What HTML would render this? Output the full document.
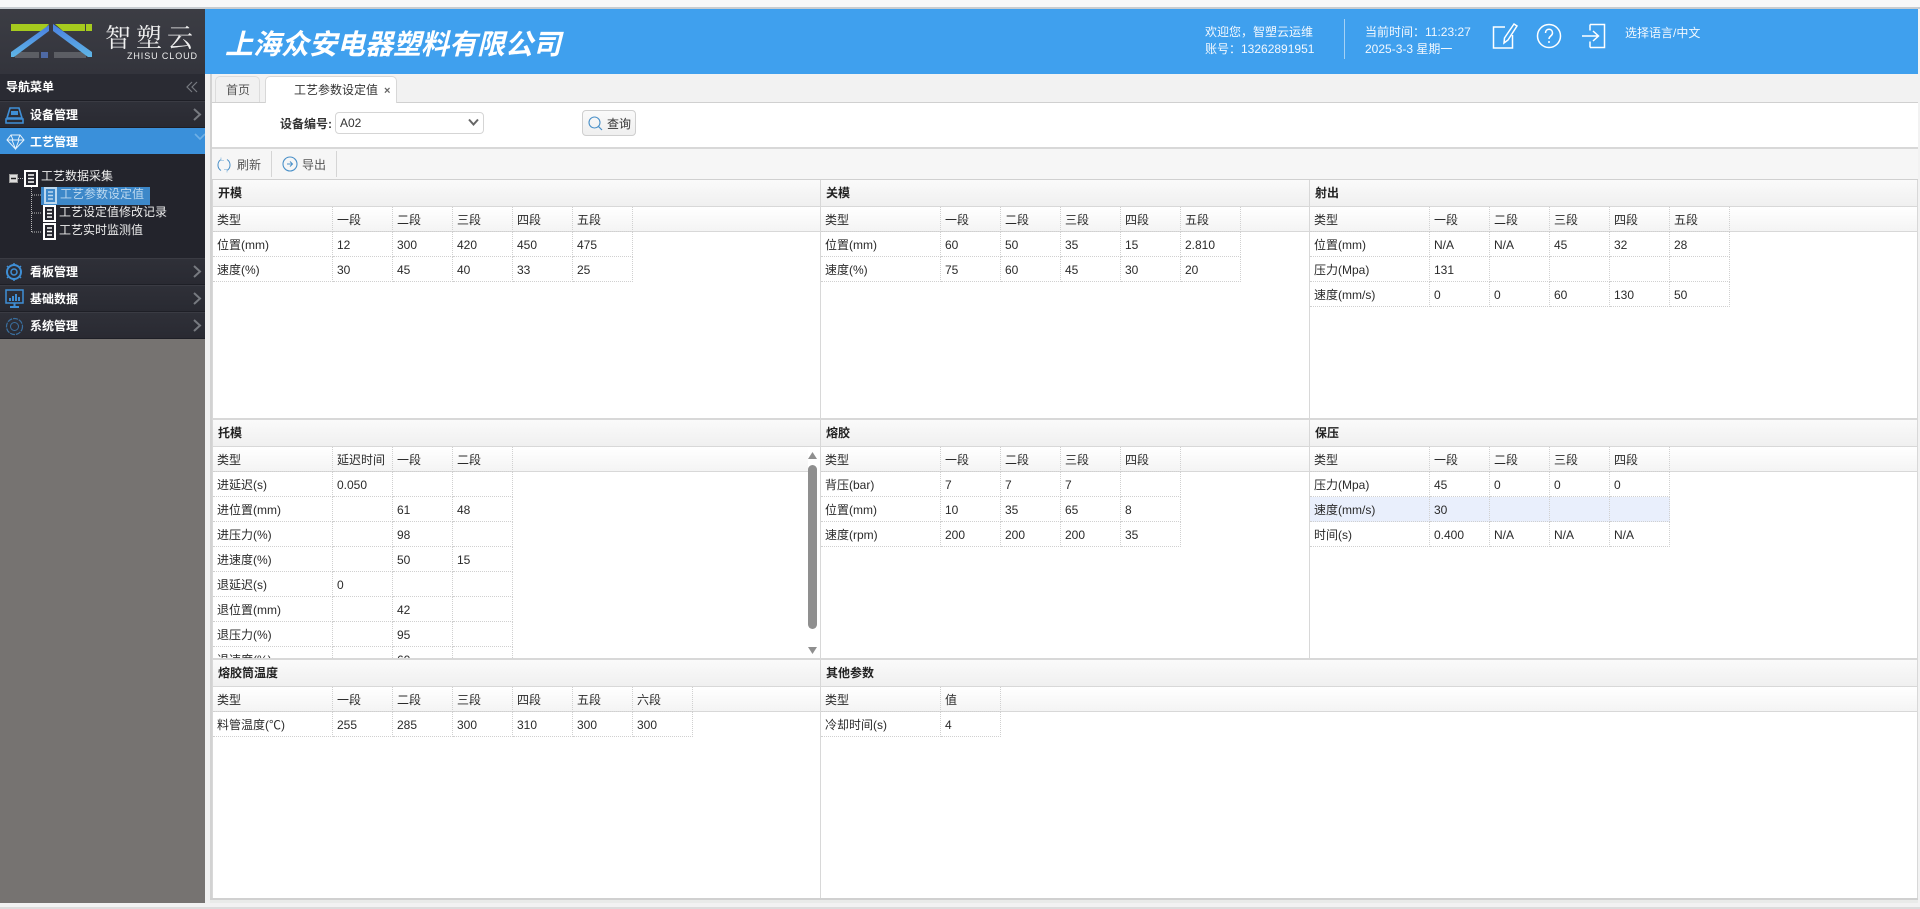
<!DOCTYPE html>
<html lang="zh-CN"><head><meta charset="utf-8"><title>工艺参数设定值</title>
<style>
*{box-sizing:border-box}
html,body{margin:0;padding:0;width:1920px;height:909px;overflow:hidden;background:#f2f2f2}
body{font:12px/16px "Liberation Sans","Noto Sans CJK SC",sans-serif;color:#333;position:relative}
.a{position:absolute;white-space:nowrap}
svg{position:absolute;overflow:visible}
.nav{position:absolute;left:0;width:205px;height:27px;background:linear-gradient(#2f3038,#292a32);border-bottom:1px solid #1e1f26;border-top:1px solid #3a3b43}
.nav b{position:absolute;left:30px;top:5px;color:#fff;font-size:12px;line-height:16px}
.chev{position:absolute;left:193px;top:6px;width:9px;height:13px}
.p{position:absolute;overflow:hidden;background:#fff}
.p .h{position:absolute;left:0;right:0;top:0;height:27px;background:linear-gradient(#fafafa,#f0f0f0);border-bottom:1px solid #d8d8d8;font-weight:bold;color:#222;line-height:27px;padding-left:5px}
.p .s{position:absolute;left:0;right:0;top:27px;height:25px;background:linear-gradient(#fff,#f4f4f4);border-bottom:1px solid #d8d8d8}
.p table{position:absolute;left:0;top:27px;border-collapse:separate;border-spacing:0;table-layout:fixed}
td{width:60px;height:25px;padding:2px 0 0 4px;line-height:22px;border-right:1px dotted #d0d0d0;border-bottom:1px dotted #d0d0d0;white-space:nowrap;overflow:hidden;font-size:12px;color:#2a2a2a}
td:first-child{width:120px}
.hv td{background:#e9effc}
.t{color:#eee;font-size:12px;line-height:16px}
</style></head><body>
<div class="a" style="left:0;top:0;width:1920px;height:7px;background:#f8f8f8"></div>
<div class="a" style="left:0;top:7px;width:1920px;height:2px;background:#c8ccd0"></div>

<!-- sidebar -->
<div class="a" style="left:0;top:9px;width:205px;height:65px;background:linear-gradient(#3c3d44,#33343c)"></div>
<svg style="left:0;top:9px" width="205" height="65" viewBox="0 9 205 65">
<defs><linearGradient id="g1" x1="0" y1="0" x2="0" y2="1"><stop offset="0" stop-color="#4a7fe0"/><stop offset="1" stop-color="#5fb6e6"/></linearGradient></defs>
<rect x="15" y="52" width="24" height="6" fill="#8b8d93" opacity=".45"/>
<rect x="41" y="52" width="7" height="6" fill="#5a7fd0" opacity=".7"/>
<rect x="54" y="52" width="32" height="6" fill="#8b8d93" opacity=".45"/>
<polygon points="11,24 49,24 43,31 11,31" fill="#a6cb1e"/>
<polygon points="55,24 85,24 85,31 63,31" fill="#a6cb1e"/>
<rect x="86" y="24" width="6" height="7" fill="#a6cb1e"/>
<polygon points="49,25 11,52 11,57 14,57 49,31" fill="url(#g1)"/>
<polygon points="53,24 92,52 92,57 88,57 53,31" fill="url(#g1)"/>
</svg>
<div class="a" style="left:105px;top:20px;font-size:26px;line-height:34px;color:#f0f0f0;letter-spacing:5px;font-family:'Noto Serif CJK SC','Noto Sans CJK SC',serif">智塑云</div>
<div class="a" style="left:127px;top:49px;font-size:9px;line-height:14px;color:#eee;letter-spacing:.9px">ZHISU CLOUD</div>

<div class="a" style="left:0;top:74px;width:205px;height:27px;background:#2a2b33;border-bottom:1px solid #1e1f26"></div>
<b class="a" style="left:6px;top:79px;color:#fff">导航菜单</b>
<svg style="left:186px;top:81px" width="12" height="12"><path d="M6 1L1 6l5 5M11 1L6 6l5 5" fill="none" stroke="#777a80" stroke-width="1.2"/></svg>

<div class="nav" style="top:101px"><b style="top:5px">设备管理</b>
<svg style="left:5px;top:5px" width="19" height="17"><path d="M5 1h9l3 10H2zM1 12h17v4H1z" fill="none" stroke="#3f8fd6" stroke-width="1.6"/><rect x="6" y="4" width="7" height="4" fill="#3f8fd6"/></svg>
<svg class="chev" viewBox="0 0 9 13"><path d="M1 1l6 5.500L1 12" fill="none" stroke="#777a80" stroke-width="2"/></svg></div>

<div class="a" style="left:0;top:128px;width:205px;height:26px;background:#3a90da"></div>
<b class="a" style="left:30px;top:134px;color:#fff">工艺管理</b>
<svg style="left:6px;top:134px" width="20" height="16"><path d="M5 1h9l4 5-8.500 9L1 6zM1 6h17M6 6l3.500 9L13 6M5 1l2 5M14 1l-2 5" fill="none" stroke="#e6f2fb" stroke-width="1"/></svg>
<svg style="left:194px;top:133px" width="12" height="8"><path d="M1 1l5 5 5-5" fill="none" stroke="#6fb0e6" stroke-width="1.6"/></svg>

<div class="a" style="left:0;top:154px;width:205px;height:104px;background:#23242c"></div>
<svg style="left:0;top:165px" width="205" height="75" viewBox="0 165 205 75">
<rect x="9.500" y="174.500" width="8" height="8" fill="#ddd" stroke="#999"/><path d="M11 178.500h5" stroke="#222" stroke-width="1.500"/>
<path d="M18 178.500h5M31.500 187v46M32 195h9M32 213h10M32 232h10" stroke="#bbb" stroke-dasharray="1 1" fill="none"/>
<rect x="41" y="187" width="109" height="18" fill="#3d88c9"/>
<g fill="none">
<rect x="25" y="171" width="12" height="15" fill="#23242c" stroke="#fff" stroke-width="2"/><path d="M28 175h6M28 178.500h6M28 182h6" stroke="#fff" stroke-width="1.500"/>
<rect x="45" y="188" width="11" height="15" stroke="#bcd8ef" stroke-width="2"/><path d="M48 192h5M48 195.500h5M48 199h5" stroke="#bcd8ef" stroke-width="1.500"/>
<rect x="44" y="206" width="11" height="15" fill="#23242c" stroke="#fff" stroke-width="2"/><path d="M47 210h5M47 213.500h5M47 217h5" stroke="#fff" stroke-width="1.500"/>
<rect x="44" y="224" width="11" height="15" fill="#23242c" stroke="#fff" stroke-width="2"/><path d="M47 228h5M47 231.500h5M47 235h5" stroke="#fff" stroke-width="1.500"/>
</g></svg>
<div class="a t" style="left:41px;top:168px">工艺数据采集</div>
<div class="a t" style="left:60px;top:186px;color:#bcd8ef">工艺参数设定值</div>
<div class="a t" style="left:59px;top:204px">工艺设定值修改记录</div>
<div class="a t" style="left:59px;top:222px">工艺实时监测值</div>

<div class="nav" style="top:258px"><b>看板管理</b>
<svg style="left:5px;top:4px" width="18" height="18"><circle cx="9" cy="9" r="7" fill="none" stroke="#3f8fd6" stroke-width="2"/><circle cx="9" cy="9" r="3" fill="none" stroke="#3f8fd6" stroke-width="1.500"/><path d="M9 0v2M9 16v2M2 3l1 1M16 3l-1 1M2 15l1-1M16 15l-1-1" stroke="#3f8fd6" stroke-width="1.500"/></svg>
<svg class="chev" viewBox="0 0 9 13"><path d="M1 1l6 5.500L1 12" fill="none" stroke="#777a80" stroke-width="2"/></svg></div>
<div class="nav" style="top:285px;height:27px"><b>基础数据</b>
<svg style="left:5px;top:3px" width="19" height="20"><rect x="1" y="1" width="17" height="13" fill="none" stroke="#3f8fd6" stroke-width="1.500"/><path d="M5 12V9M8 12V7M11 12V5M14 12V8M9.500 14v3M5 18h9" stroke="#3f8fd6" stroke-width="2"/></svg>
<svg class="chev" viewBox="0 0 9 13"><path d="M1 1l6 5.500L1 12" fill="none" stroke="#777a80" stroke-width="2"/></svg></div>
<div class="nav" style="top:312px"><b>系统管理</b>
<svg style="left:5px;top:4px" width="19" height="19"><circle cx="9.500" cy="9.500" r="8" fill="none" stroke="#3a6f9f" stroke-width="1.200" stroke-dasharray="5 1"/><circle cx="9.500" cy="9.500" r="4" fill="none" stroke="#3a6f9f" stroke-width="1"/></svg>
<svg class="chev" viewBox="0 0 9 13"><path d="M1 1l6 5.500L1 12" fill="none" stroke="#777a80" stroke-width="2"/></svg></div>
<div class="a" style="left:0;top:339px;width:205px;height:564px;background:#767371"></div>

<!-- header -->
<div class="a" style="left:205px;top:9px;width:1713px;height:65px;background:#3fa0ee"></div>
<div class="a" style="left:225px;top:25px;font-size:28px;line-height:40px;font-weight:bold;font-style:italic;color:#fff">上海众安电器塑料有限公司</div>
<div class="a t" style="left:1205px;top:24px;color:#f2f8fe">欢迎您，智塑云运维</div>
<div class="a t" style="left:1205px;top:41px;color:#f2f8fe">账号：13262891951</div>
<div class="a" style="left:1344px;top:19px;width:1px;height:40px;background:#a5d2f6"></div>
<div class="a t" style="left:1365px;top:24px;color:#f2f8fe">当前时间：11:23:27</div>
<div class="a t" style="left:1365px;top:41px;color:#f2f8fe">2025-3-3 星期一</div>
<svg style="left:1490px;top:22px" width="32" height="28"><path d="M15 5H3.500v21h19V13" fill="none" stroke="#fff" stroke-width="1.500"/><path d="M24 2l3 2-9 14-4 3 .5-5z" fill="none" stroke="#fff" stroke-width="1.500"/></svg>
<svg style="left:1535px;top:22px" width="28" height="28"><circle cx="14" cy="14" r="11.500" fill="none" stroke="#fff" stroke-width="1.500"/><path d="M10.500 11c0-5 7-5 7 0 0 3-3.500 3-3.500 6" fill="none" stroke="#fff" stroke-width="1.500"/><circle cx="14" cy="20" r="1" fill="#fff"/></svg>
<svg style="left:1580px;top:22px" width="28" height="28"><path d="M10 2.500h14.500v23H10M10 2.500v6M10 25.500v-6M2 14h16M13 9l5.500 5-5.500 5" fill="none" stroke="#fff" stroke-width="1.500"/></svg>
<div class="a t" style="left:1625px;top:25px;color:#f2f8fe">选择语言/中文</div>

<!-- tabs -->
<div class="a" style="left:205px;top:74px;width:5px;height:829px;background:#f0f0f0"></div>
<div class="a" style="left:210px;top:74px;width:2px;height:825px;background:#d2d2d2"></div>
<div class="a" style="left:212px;top:74px;width:1706px;height:28px;background:#f2f2f2"></div>
<div class="a" style="left:215px;top:76px;width:45px;height:26px;background:#f1f1f1;border:1px solid #dcdcdc;border-bottom:0;border-radius:5px 5px 0 0;padding:1px 0 0 10px;line-height:24px;color:#555">首页</div>
<div class="a" style="left:265px;top:76px;width:132px;height:27px;background:#fff;border:1px solid #d8d8d8;border-bottom:0;border-radius:5px 5px 0 0;padding:1px 0 0 28px;line-height:24px;color:#333;z-index:2">工艺参数设定值<b style="color:#666;font-size:11px;margin-left:6px">×</b></div>
<div class="a" style="left:212px;top:102px;width:1706px;height:1px;background:#d0d0d0"></div>

<!-- query -->
<div class="a" style="left:212px;top:103px;width:1706px;height:44px;background:#fff"></div>
<b class="a" style="left:280px;top:116px;color:#333">设备编号:</b>
<div class="a" style="left:335px;top:112px;width:149px;height:22px;background:#fff;border:1px solid #d5d5d5;border-radius:4px;padding:1px 0 0 4px;line-height:18px;color:#333">A02</div>
<svg style="left:468px;top:118px" width="11" height="9"><path d="M1 1.500l4.500 5 4.500-5" fill="none" stroke="#666" stroke-width="2"/></svg>
<div class="a" style="left:582px;top:110px;width:54px;height:26px;background:linear-gradient(#fafafa,#efefef);border:1px solid #cfcfcf;border-radius:4px;padding:1px 0 0 24px;line-height:24px;color:#333">查询</div>
<svg style="left:588px;top:116px" width="15" height="15"><circle cx="6.500" cy="6.500" r="5.500" fill="none" stroke="#4a90c8" stroke-width="1.100"/><path d="M10.500 10.500l3.500 3.500" stroke="#4a90c8" stroke-width="1.200"/></svg>
<div class="a" style="left:212px;top:147px;width:1706px;height:2px;background:#d8d8d8"></div>

<!-- toolbar -->
<div class="a" style="left:212px;top:149px;width:1706px;height:30px;background:#f6f6f6"></div>
<div class="a" style="left:271px;top:151px;width:1px;height:26px;background:#d5d5d5"></div>
<div class="a" style="left:336px;top:151px;width:1px;height:26px;background:#d5d5d5"></div>
<svg style="left:217px;top:157px" width="14" height="16"><path d="M4 2.500a6.500 6.500 0 0 0 0 11M10 2.500a6.500 6.500 0 0 1 0 11" fill="none" stroke="#4a90c8" stroke-width="1"/><path d="M4 .5v3h3M10 15.500v-3H7" fill="none" stroke="#9dc4e2" stroke-width=".8"/></svg>
<div class="a" style="left:237px;top:157px;color:#555">刷新</div>
<svg style="left:282px;top:156px" width="16" height="16"><circle cx="8" cy="8" r="7" fill="none" stroke="#4a90c8" stroke-width="1.100"/><path d="M5 8h5M8 5.500L10.500 8 8 10.500" fill="none" stroke="#4a90c8"/></svg>
<div class="a" style="left:302px;top:157px;color:#555">导出</div>
<div class="a" style="left:212px;top:179px;width:1706px;height:1px;background:#d0d0d0"></div>

<!-- panels row 1 -->
<div class="p" style="left:213px;top:180px;width:607px;height:238px"><div class="h">开模</div><div class="s"></div>
<table><tr><td>类型</td><td>一段</td><td>二段</td><td>三段</td><td>四段</td><td>五段</td></tr>
<tr><td>位置(mm)</td><td>12</td><td>300</td><td>420</td><td>450</td><td>475</td></tr>
<tr><td>速度(%)</td><td>30</td><td>45</td><td>40</td><td>33</td><td>25</td></tr></table></div>

<div class="p" style="left:821px;top:180px;width:488px;height:238px"><div class="h">关模</div><div class="s"></div>
<table><tr><td>类型</td><td>一段</td><td>二段</td><td>三段</td><td>四段</td><td>五段</td></tr>
<tr><td>位置(mm)</td><td>60</td><td>50</td><td>35</td><td>15</td><td>2.810</td></tr>
<tr><td>速度(%)</td><td>75</td><td>60</td><td>45</td><td>30</td><td>20</td></tr></table></div>

<div class="p" style="left:1310px;top:180px;width:607px;height:238px"><div class="h">射出</div><div class="s"></div>
<table><tr><td>类型</td><td>一段</td><td>二段</td><td>三段</td><td>四段</td><td>五段</td></tr>
<tr><td>位置(mm)</td><td>N/A</td><td>N/A</td><td>45</td><td>32</td><td>28</td></tr>
<tr><td>压力(Mpa)</td><td>131</td><td></td><td></td><td></td><td></td></tr>
<tr><td>速度(mm/s)</td><td>0</td><td>0</td><td>60</td><td>130</td><td>50</td></tr></table></div>

<!-- panels row 2 -->
<div class="p" style="left:213px;top:420px;width:607px;height:238px"><div class="h">托模</div><div class="s" style="right:12px"></div>
<table><tr><td>类型</td><td>延迟时间</td><td>一段</td><td>二段</td></tr>
<tr><td>进延迟(s)</td><td>0.050</td><td></td><td></td></tr>
<tr><td>进位置(mm)</td><td></td><td>61</td><td>48</td></tr>
<tr><td>进压力(%)</td><td></td><td>98</td><td></td></tr>
<tr><td>进速度(%)</td><td></td><td>50</td><td>15</td></tr>
<tr><td>退延迟(s)</td><td>0</td><td></td><td></td></tr>
<tr><td>退位置(mm)</td><td></td><td>42</td><td></td></tr>
<tr><td>退压力(%)</td><td></td><td>95</td><td></td></tr>
<tr><td>退速度(%)</td><td></td><td>60</td><td></td></tr></table></div>
<div class="a" style="left:808px;top:465px;width:9px;height:164px;background:#8f8f8f;border-radius:5px"></div>
<svg style="left:807px;top:452px" width="11" height="8"><path d="M5.500 0L10 7H1z" fill="#8f8f8f"/></svg>
<svg style="left:807px;top:647px" width="11" height="8"><path d="M5.500 7L10 0H1z" fill="#8f8f8f"/></svg>

<div class="p" style="left:821px;top:420px;width:488px;height:238px"><div class="h">熔胶</div><div class="s"></div>
<table><tr><td>类型</td><td>一段</td><td>二段</td><td>三段</td><td>四段</td></tr>
<tr><td>背压(bar)</td><td>7</td><td>7</td><td>7</td><td></td></tr>
<tr><td>位置(mm)</td><td>10</td><td>35</td><td>65</td><td>8</td></tr>
<tr><td>速度(rpm)</td><td>200</td><td>200</td><td>200</td><td>35</td></tr></table></div>

<div class="p" style="left:1310px;top:420px;width:607px;height:238px"><div class="h">保压</div><div class="s"></div>
<table><tr><td>类型</td><td>一段</td><td>二段</td><td>三段</td><td>四段</td></tr>
<tr><td>压力(Mpa)</td><td>45</td><td>0</td><td>0</td><td>0</td></tr>
<tr class="hv"><td>速度(mm/s)</td><td>30</td><td></td><td></td><td></td></tr>
<tr><td>时间(s)</td><td>0.400</td><td>N/A</td><td>N/A</td><td>N/A</td></tr></table></div>

<!-- panels row 3 -->
<div class="p" style="left:213px;top:660px;width:607px;height:238px"><div class="h">熔胶筒温度</div><div class="s"></div>
<table><tr><td>类型</td><td>一段</td><td>二段</td><td>三段</td><td>四段</td><td>五段</td><td>六段</td></tr>
<tr><td>料管温度(℃)</td><td>255</td><td>285</td><td>300</td><td>310</td><td>300</td><td>300</td></tr></table></div>

<div class="p" style="left:821px;top:660px;width:1096px;height:238px"><div class="h">其他参数</div><div class="s"></div>
<table><tr><td>类型</td><td>值</td></tr>
<tr><td>冷却时间(s)</td><td>4</td></tr></table></div>

<!-- dividers -->
<div class="a" style="left:212px;top:180px;width:1px;height:718px;background:#d8d8d8"></div>
<div class="a" style="left:820px;top:180px;width:1px;height:718px;background:#d8d8d8"></div>
<div class="a" style="left:1309px;top:180px;width:1px;height:478px;background:#d8d8d8"></div>
<div class="a" style="left:1917px;top:180px;width:1px;height:718px;background:#d8d8d8"></div>
<div class="a" style="left:212px;top:418px;width:1706px;height:2px;background:#d8d8d8"></div>
<div class="a" style="left:212px;top:658px;width:1706px;height:2px;background:#d8d8d8"></div>
<div class="a" style="left:210px;top:898px;width:1708px;height:2px;background:#d0d0d0"></div>
<div class="a" style="left:210px;top:900px;width:1708px;height:3px;background:#e9ebe9"></div>
<div class="a" style="left:0;top:907px;width:1920px;height:2px;background:#dcdcdc"></div>
</body></html>
